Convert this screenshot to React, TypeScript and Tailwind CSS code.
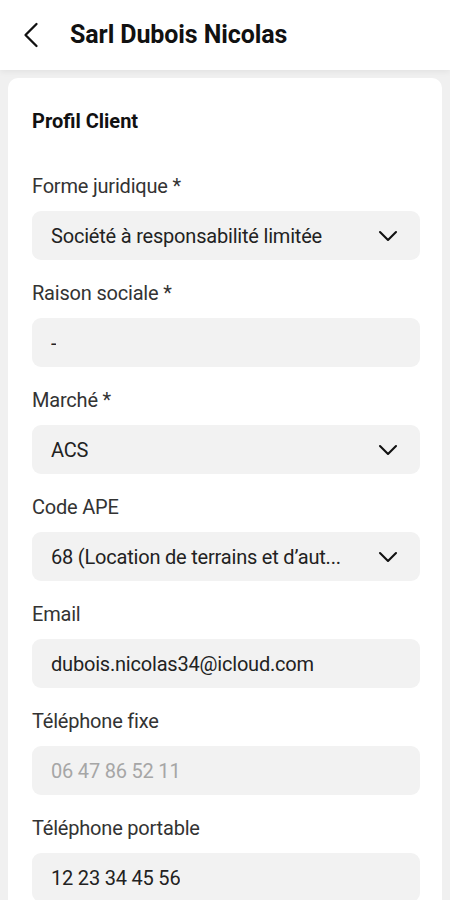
interface Field {
  label: string;
  value: string;
  select?: boolean;
  muted?: boolean;
}

const FIELDS: Field[] = [
  { label: 'Forme juridique *', value: 'Société à responsabilité limitée', select: true },
  { label: 'Raison sociale *', value: '-' },
  { label: 'Marché *', value: 'ACS', select: true },
  { label: 'Code APE', value: '68 (Location de terrains et d’aut...', select: true },
  { label: 'Email', value: 'dubois.nicolas34@icloud.com' },
  { label: 'Téléphone fixe', value: '06 47 86 52 11', muted: true },
  { label: 'Téléphone portable', value: '12 23 34 45 56' },
];

function BackIcon() {
  return (
    <svg width="16" height="26" viewBox="0 0 16 26" fill="none" className="shrink-0">
      <polyline
        points="13.5,2 2.5,13 13.5,24"
        stroke="#111"
        strokeWidth="2.3"
        strokeLinecap="round"
        strokeLinejoin="round"
      />
    </svg>
  );
}

function DownIcon() {
  return (
    <svg width="20" height="12" viewBox="0 0 20 12" fill="none" className="shrink-0">
      <polyline
        points="2,2 10,10 18,2"
        stroke="#111"
        strokeWidth="2.1"
        strokeLinecap="round"
        strokeLinejoin="round"
      />
    </svg>
  );
}

export default function App() {
  return (
    <div className="h-[900px] w-[450px] overflow-hidden bg-[#f0f0f0] font-['Roboto',sans-serif]">
      <header className="relative z-10 flex h-[70px] items-center gap-[31px] bg-white pl-[23px] shadow-[0_2px_6px_rgba(0,0,0,0.06)]">
        <BackIcon />
        <h1 className="text-[25px] font-bold tracking-[-0.1px] text-[#111]">Sarl Dubois Nicolas</h1>
      </header>

      <div className="px-[8px] pt-[8px]">
        <div className="rounded-t-[10px] bg-white pl-[24px] pr-[22px] pt-[29px] pb-[20px]">
          <h2 className="text-[20px] font-bold leading-[28px] text-[#111]">Profil Client</h2>

          <div className="mt-[39px] flex flex-col gap-[21px]">
            {FIELDS.map((f) => (
              <div key={f.label} className="flex flex-col gap-[13px]">
                <label className="text-[20px] leading-[24px] tracking-[-0.2px] text-[#333]">{f.label}</label>
                <div className="flex h-[49px] items-center justify-between rounded-[9px] bg-[#f2f2f2] pl-[19px] pr-[22px]">
                  <span
                    className={
                      f.muted
                        ? 'truncate text-[20px] tracking-[-0.2px] text-[#a6a6a6]'
                        : 'truncate text-[20px] tracking-[-0.2px] text-[#222]'
                    }
                  >
                    {f.value}
                  </span>
                  {f.select && <DownIcon />}
                </div>
              </div>
            ))}
          </div>
        </div>
      </div>
    </div>
  );
}
